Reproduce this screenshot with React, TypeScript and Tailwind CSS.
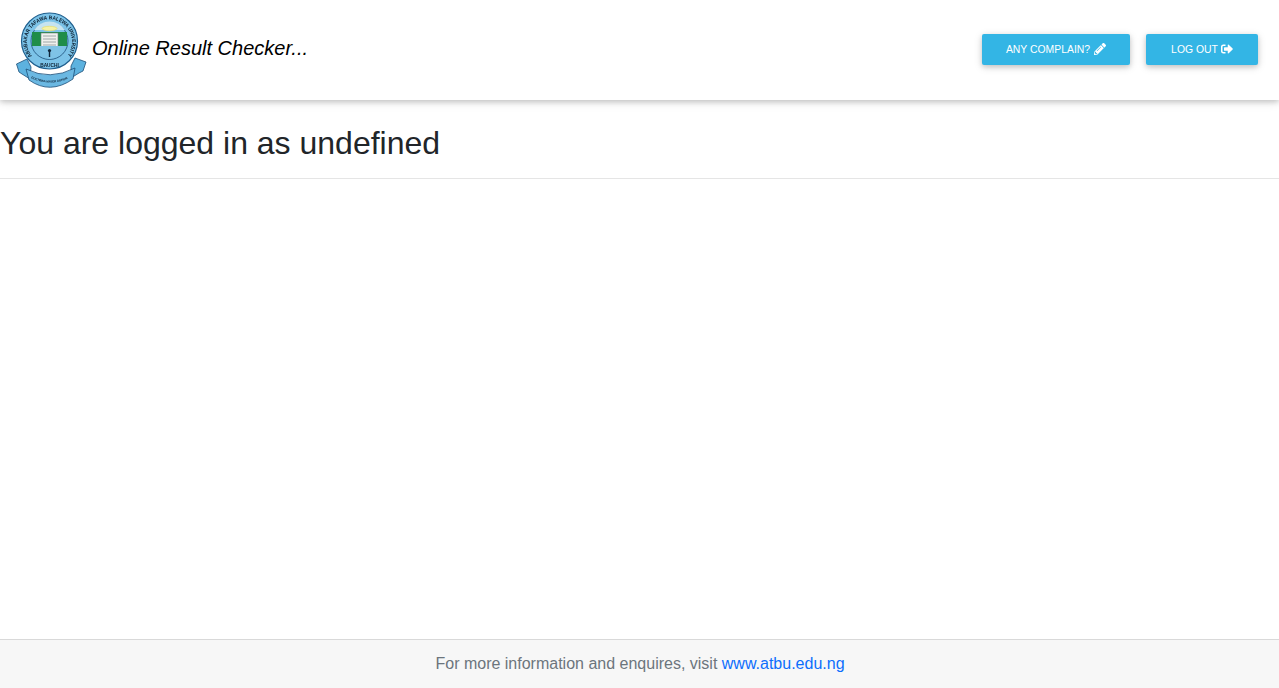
import React from "react";
import { FaPencilAlt, FaSignOutAlt } from "react-icons/fa";

function Logo() {
  return (
    <svg width="72" height="78" viewBox="15 11 72 78" className="shrink-0 blur-[0.35px]">
      <defs>
        <path id="ring" d="M 32 56 A 22.5 22.5 0 1 1 67 56" fill="none" />
        <path id="motto" d="M 31 78 Q 50 87.5 71 77.5" fill="none" />
      </defs>
      <path d="M16.5 64 L27 59 L31 67 L30 79 L22 74 L19 72 Z" fill="#5db2df" stroke="#1d4f78" strokeWidth="0.8" />
      <path d="M86 62 L75 58 L71 66 L71 78 L79 73 L83 71 Z" fill="#5db2df" stroke="#1d4f78" strokeWidth="0.8" />
      <path d="M26 69 Q50 81 75 68 L73 79 Q50 95 29 80 Z" fill="#6bb8e2" stroke="#1d4f78" strokeWidth="0.8" />
      <circle cx="49.5" cy="41" r="28" fill="#7cc3e8" stroke="#1f5f8e" strokeWidth="1.2" />
      <circle cx="49.5" cy="41" r="18.5" fill="#7cc3e8" stroke="#1d4f78" strokeWidth="0.8" />
      <text fontSize="5.4" fontWeight="700" fill="#0c1f30" fontFamily="Liberation Sans, sans-serif">
        <textPath href="#ring" textLength="100" lengthAdjust="spacingAndGlyphs">ABUBAKAR TAFAWA BALEWA UNIVERSITY</textPath>
      </text>
      <text x="49.5" y="67" textAnchor="middle" fontSize="4.8" fontWeight="700" fill="#0c1f30" fontFamily="Liberation Sans, sans-serif">BAUCHI</text>
      <path d="M34 30 A18.5 18.5 0 0 1 65 30 Z" fill="#c6e4f1" />
      <ellipse cx="49.5" cy="28.5" rx="7.5" ry="2.2" fill="#f6f3a6" stroke="#e8dd6a" strokeWidth="0.7" />
      <path d="M32 32 L67 32 L67 46 L32 46 Z" fill="#1f8d49" />
      <path d="M41 33 L58 33 L58 47 L50 49 L41 47 Z" fill="#f0f1ee" stroke="#6f7c80" strokeWidth="0.6" />
      <path d="M43 36 H56 M43 39 H56 M43 42 H56 M43 45 H56" stroke="#8a9496" strokeWidth="0.8" />
      <path d="M34 46 L65 46 C63 52 57 57 49.5 59 C42 57 36 52 34 46 Z" fill="#7fc3e6" />
      <path d="M48.8 50 H50.2 V57 H48.8 Z" fill="#10263a" />
      <circle cx="49.5" cy="50.5" r="1.6" fill="#10263a" />
      <text fontSize="3" fill="#10263a" fontFamily="Liberation Sans, sans-serif" fontWeight="700">
        <textPath href="#motto" textLength="38" lengthAdjust="spacingAndGlyphs">DOCTRINA MATER ARTIUM</textPath>
      </text>
    </svg>
  );
}

function Btn({ className, children }: { className: string; children: React.ReactNode }) {
  return (
    <button className={`flex h-[31px] items-center justify-center rounded-[2px] bg-[#33b5e5] text-[10.4px] text-white uppercase shadow-[0_2px_5px_0_rgba(0,0,0,0.16),0_2px_10px_0_rgba(0,0,0,0.12)] ${className}`}>
      {children}
    </button>
  );
}

export default function App() {
  return (
    <div className="flex h-[688px] flex-col overflow-hidden bg-white font-['Liberation_Sans',Arial,sans-serif] text-[#212529]">
      <header className="flex h-[100px] shrink-0 items-center justify-between pr-[21px] pl-[15px] shadow-[0_2px_5px_0_rgba(0,0,0,0.16),0_2px_10px_0_rgba(0,0,0,0.12)]">
        <div className="flex items-center gap-[5px]">
          <Logo />
          <span className="-mt-[4px] text-[20px] text-black italic">Online Result Checker...</span>
        </div>
        <div className="-mt-[2px] flex gap-4">
          <Btn className="w-[148px] gap-1">
            <span className="pt-px">Any Complain?</span>
            <FaPencilAlt className="size-[12px]" />
          </Btn>
          <Btn className="w-[112px] gap-[3px]">
            <span className="pt-px">Log Out</span>
            <FaSignOutAlt className="size-[12px]" />
          </Btn>
        </div>
      </header>
      <main className="flex-1">
        <h2 className="mt-[24px] text-[32px] leading-[38px]">You are logged in as undefined</h2>
        <hr className="mt-[16px] border-t border-[#e5e5e5]" />
      </main>
      <footer className="flex h-[49px] shrink-0 items-center justify-center border-t border-[#d9d9d9] bg-[#f7f7f7] pl-[1px] text-[16px] text-[#6c757d]">
        <p>
          For more information and enquires, visit <a href="#" className="text-[#0d6efd]">www.atbu.edu.ng</a>
        </p>
      </footer>
    </div>
  );
}
